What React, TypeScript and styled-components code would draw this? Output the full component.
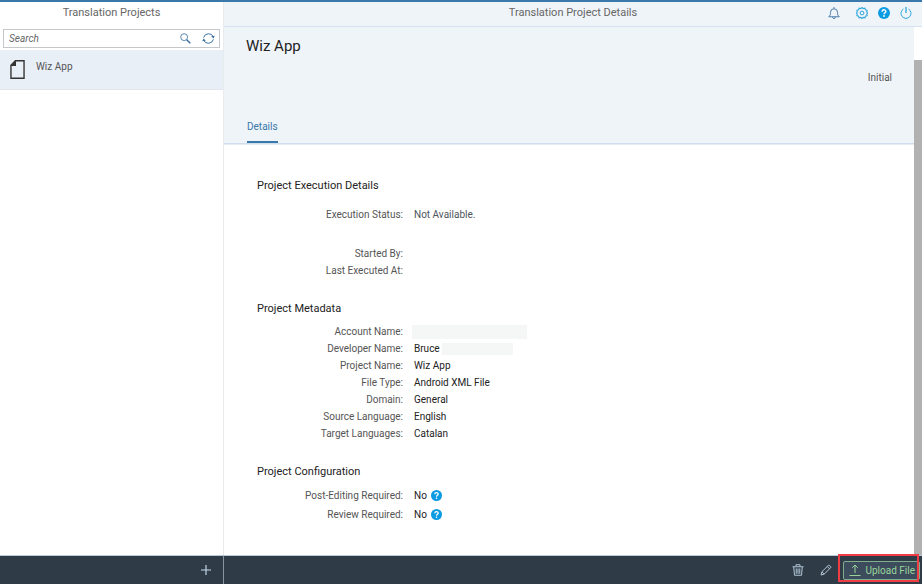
import React from "react";
import styled, { createGlobalStyle } from "styled-components";

const GlobalStyle = createGlobalStyle`
  *, *::before, *::after { box-sizing: border-box; }
  body { margin: 0; font-family: Roboto, "Liberation Sans", sans-serif; font-size: 10px; color: #333; background: #fff; }
  button, input { font: inherit; }
  h1, h2, h3, p, dl, dd, ul { margin: 0; padding: 0; font-weight: 400; }
`;

const Shell = styled.div`
  display: flex;
  min-height: 100vh;
  border-top: 2px solid #3a78ab;
  overflow: hidden;
`;

const Sidebar = styled.aside`
  flex: 0 0 223px;
  display: flex;
  flex-direction: column;
  background: #fff;
`;

const Main = styled.main`
  flex: 1;
  min-width: 0;
  display: flex;
  flex-direction: column;
  border-left: 1px solid #e9ecef;
`;

const SidebarTitle = styled.h2`
  height: 25px;
  line-height: 22px;
  text-align: center;
  font-size: 11px;
  color: #666;
`;

const SearchBox = styled.form`
  display: flex;
  align-items: center;
  gap: 11px;
  height: 19px;
  margin: 2px 3px;
  padding: 0 4px 0 5px;
  border: 1px solid #c4c8ca;
`;

const SearchInput = styled.input`
  flex: 1;
  min-width: 0;
  padding: 0;
  border: 0;
  outline: 0;
  background: transparent;
  color: #444;
  &::placeholder { color: #666; font-style: italic; opacity: 1; }
`;

const IconButton = styled.button<{ $color: string }>`
  display: flex;
  padding: 0;
  border: 0;
  background: transparent;
  color: ${(p) => p.$color};
  cursor: pointer;
`;

const ProjectItem = styled.li`
  display: flex;
  gap: 11px;
  height: 40px;
  padding: 10px;
  list-style: none;
  background: #e8eff7;
  border-bottom: 1px solid #e2e6ea;
  color: #555;
  line-height: 14px;
`;

const FootBar = styled.footer<{ $divider?: boolean }>`
  display: flex;
  align-items: center;
  justify-content: flex-end;
  height: 29px;
  margin-top: auto;
  margin-left: ${(p) => (p.$divider ? "-1px" : "0")};
  padding-right: ${(p) => (p.$divider ? "2px" : "12px")};
  background: #2f3c48;
  border-top: 1px solid #b9cbdb;
  border-left: ${(p) => (p.$divider ? "1px solid #8b949c" : "0")};
`;

const TopBar = styled.header`
  display: grid;
  grid-template-columns: 1fr auto 1fr;
  align-items: center;
  height: 25px;
  padding-bottom: 2px;
  background: #eff4f9;
  border-bottom: 1px solid #d9e2f2;
`;

const TopTitle = styled.h2`
  grid-column: 2;
  font-size: 11px;
  line-height: 18px;
  color: #666;
`;

const TopActions = styled.nav`
  display: flex;
  justify-content: flex-end;
  align-items: center;
  gap: 10px;
  padding-right: 10px;
`;

const BellSlot = styled.span`
  margin-right: 6px;
`;

const Body = styled.div`
  flex: 1;
  display: flex;
`;

const Page = styled.div`
  flex: 1;
  min-width: 0;
`;

const ScrollTrack = styled.div`
  flex: 0 0 8px;
  padding-top: 33px;
  display: flex;
`;

const ScrollThumb = styled.div`
  flex: 1;
  background: #b1b1b1;
`;

const ProjectHeader = styled.section`
  display: grid;
  grid-template-columns: 1fr auto;
  grid-template-rows: 41px 1fr 22px;
  height: 117px;
  padding: 0 22px;
  background: #eff4f8;
  border-bottom: 1px solid #cfddec;
  box-shadow: 0 1px 0 #e4ecf5;
`;

const ProjectTitle = styled.h1`
  font-size: 15px;
  line-height: 38px;
  color: #222;
`;

const Status = styled.p`
  grid-column: 2;
  grid-row: 2;
  line-height: 19px;
  color: #555;
`;

const Tab = styled.button`
  grid-row: 3;
  justify-self: start;
  margin-left: 1px;
  padding: 0 0 8px;
  border: 0;
  border-bottom: 2px solid #3a78ab;
  background: transparent;
  color: #3a78ab;
  line-height: 12px;
`;

const Details = styled.div`
  padding: 32px 33px 16px;
  display: grid;
  gap: 20px;
`;

const SectionTitle = styled.h3`
  margin-bottom: 5px;
  font-size: 11px;
  line-height: 19px;
  color: #222;
`;

const Fields = styled.dl<{ $row?: number; $top?: number }>`
  display: grid;
  grid-template-columns: 146px 1fr;
  grid-auto-rows: ${(p) => p.$row ?? 17}px;
  column-gap: 11px;
  line-height: ${(p) => p.$row ?? 17}px;
  margin-top: ${(p) => p.$top ?? 0}px;
`;

const Label = styled.dt`
  text-align: right;
  color: #555;
`;

const Value = styled.dd<{ $soft?: boolean }>`
  display: flex;
  align-items: center;
  gap: 4px;
  color: ${(p) => (p.$soft ? "#4c565c" : "#222")};
`;

const Redaction = styled.span<{ $width: number; $tall?: boolean }>`
  width: ${(p) => p.$width}px;
  height: ${(p) => (p.$tall ? 14 : 12)}px;
  margin-left: -2px;
  background: #f5f6f6;
`;

const FootActions = styled.div`
  display: flex;
  align-items: center;
  gap: 16px;
`;

const UploadSlot = styled.div`
  position: relative;
  margin-left: -5px;
  &::after {
    content: "";
    position: absolute;
    inset: -7px 1px -2px -5px;
    border: 2px solid #f03c44;
    pointer-events: none;
  }
`;

const UploadButton = styled.button`
  display: flex;
  align-items: center;
  gap: 5px;
  height: 19px;
  padding: 0 4px 0 5px;
  border: 1px solid #7fae8c;
  border-radius: 2px;
  background: #3c4c5c;
  color: #9bd49b;
  white-space: nowrap;
`;

type IconProps = { size?: number };

const Icon = ({ size = 12, children }: IconProps & { children: React.ReactNode }) => (
  <svg width={size} height={size} viewBox="0 0 24 24" fill="none" stroke="currentColor" strokeWidth="1.8" aria-hidden="true">
    {children}
  </svg>
);

const SearchIcon = () => (
  <Icon size={11}>
    <circle cx="9" cy="9" r="7.5" />
    <path d="M14.5 14.5l8 8" strokeWidth="3.2" />
  </Icon>
);
const RefreshIcon = () => (
  <Icon size={13}>
    <path d="M3 10.5A9.5 9.5 0 0 1 21 9M21 13.5A9.5 9.5 0 0 1 3 15" />
    <path d="M23.5 7l-2.3 5-4.2-4zM.5 17l2.3-5L7 16z" fill="currentColor" stroke="none" />
  </Icon>
);
const DocumentIcon = () => (
  <svg width="15" height="19" viewBox="0 0 14 18" aria-hidden="true">
    <path d="M5 .7h8.2v16.6H.8V5z" fill="none" stroke="#333" strokeWidth="1.3" />
    <path d="M5.6.3V5.6H.3z" fill="#333" />
  </svg>
);
const BellIcon = () => (
  <Icon size={12}>
    <path d="M1.5 19.5C4.500 17 5 15 5 10.500a7 7 0 0 1 14 0c0 4.500.5 6.500 3.500 9zM12 0v3M9 20.500c0 3.300 6 3.300 6 0" />
  </Icon>
);
const GearIcon = () => (
  <Icon size={12}>
    <path d="M12 1l2.500 2.300 3.300-.8 1.100 3.200 3.300.9-.8 3.200L23 12l-1.600 2.200.8 3.200-3.300.9-1.100 3.200-3.300-.8L12 23l-2.500-2.300-3.300.8-1.100-3.200-3.300-.9.8-3.200L1 12l1.600-2.200-.8-3.200 3.300-.9 1.100-3.200 3.300.8z" strokeWidth="2.200" />
    <circle cx="12" cy="12" r="3.800" strokeWidth="2" />
  </Icon>
);
const PowerIcon = () => (
  <Icon size={12}>
    <path d="M7 4a10 10 0 1 0 10 0" strokeWidth="2" />
    <path d="M12 0v12" strokeWidth="2.600" />
  </Icon>
);
const HelpIcon = ({ size = 11 }: IconProps) => (
  <svg width={size} height={size} viewBox="0 0 24 24" aria-hidden="true">
    <circle cx="12" cy="12" r="12" fill="#0a9be3" />
    <path d="M8.300 9.300c0-5 7.400-4.800 7.400-.5 0 2.700-3.700 2.700-3.700 5.700" fill="none" stroke="#fff" strokeWidth="2.800" />
    <circle cx="12" cy="18" r="1.800" fill="#fff" />
  </svg>
);
const PlusIcon = () => (
  <Icon size={10}>
    <path d="M12 0v24M0 12h24" strokeWidth="2.800" />
  </Icon>
);
const TrashIcon = () => (
  <Icon size={12}>
    <path d="M1 5.500h22M8 5V1.500h8V5M3.500 6l1.500 16.500h14l1.500-16.500M8.500 9v10.500M12 9v10.500M15.500 9v10.500" strokeWidth="2" />
  </Icon>
);
const PencilIcon = () => (
  <Icon size={12}>
    <path d="M2 22l1.800-6.500L17.500 2l4.500 4.500L8.500 20.200zM14.500 5l4.500 4.500M3.800 15.500l4.700 4.700" strokeWidth="2" />
  </Icon>
);
const UploadIcon = () => (
  <Icon size={12}>
    <path d="M12 18V2M6.500 7.500L12 2l5.500 5.500M1 23h22" strokeWidth="2" />
  </Icon>
);

const metadata: [string, React.ReactNode][] = [
  ["Account Name:", <Redaction key="a" $width={115} $tall />],
  ["Developer Name:", <React.Fragment key="d">Bruce <Redaction $width={71} /></React.Fragment>],
  ["Project Name:", "Wiz App"],
  ["File Type:", "Android XML File"],
  ["Domain:", "General"],
  ["Source Language:", "English"],
  ["Target Languages:", "Catalan"],
];

export default function App() {
  return (
    <>
      <GlobalStyle />
      <Shell>
        <Sidebar>
          <SidebarTitle>Translation Projects</SidebarTitle>
          <SearchBox>
            <SearchInput type="search" placeholder="Search" aria-label="Search" />
            <IconButton type="button" $color="#3a6f9f" aria-label="Search projects"><SearchIcon /></IconButton>
            <IconButton type="button" $color="#3a6f9f" aria-label="Refresh"><RefreshIcon /></IconButton>
          </SearchBox>
          <ul>
            <ProjectItem><DocumentIcon />Wiz App</ProjectItem>
          </ul>
          <FootBar>
            <IconButton type="button" $color="#c5d9eb" aria-label="Add project"><PlusIcon /></IconButton>
          </FootBar>
        </Sidebar>
        <Main>
          <TopBar>
            <TopTitle>Translation Project Details</TopTitle>
            <TopActions>
              <BellSlot>
                <IconButton type="button" $color="#3a6f9f" aria-label="Notifications"><BellIcon /></IconButton>
              </BellSlot>
              <IconButton type="button" $color="#2fa6de" aria-label="Settings"><GearIcon /></IconButton>
              <IconButton type="button" $color="#0a9be3" aria-label="Help"><HelpIcon size={12} /></IconButton>
              <IconButton type="button" $color="#2fa6de" aria-label="Log off"><PowerIcon /></IconButton>
            </TopActions>
          </TopBar>
          <Body>
            <Page>
              <ProjectHeader>
                <ProjectTitle>Wiz App</ProjectTitle>
                <Status>Initial</Status>
                <Tab type="button">Details</Tab>
              </ProjectHeader>
              <Details>
                <section>
                  <SectionTitle>Project Execution Details</SectionTitle>
                  <Fields $top={11}>
                    <Label>Execution Status:</Label><Value $soft>Not Available.</Value>
                  </Fields>
                  <Fields $top={22}>
                    <Label>Started By:</Label><Value />
                    <Label>Last Executed At:</Label><Value />
                  </Fields>
                </section>
                <section>
                  <SectionTitle>Project Metadata</SectionTitle>
                  <Fields>
                    {metadata.map(([label, value]) => (
                      <React.Fragment key={label}>
                        <Label>{label}</Label><Value>{value}</Value>
                      </React.Fragment>
                    ))}
                  </Fields>
                </section>
                <section>
                  <SectionTitle>Project Configuration</SectionTitle>
                  <Fields $row={19}>
                    <Label>Post-Editing Required:</Label>
                    <Value>No <IconButton type="button" $color="#0a9be3" aria-label="About post-editing"><HelpIcon /></IconButton></Value>
                    <Label>Review Required:</Label>
                    <Value>No <IconButton type="button" $color="#0a9be3" aria-label="About review"><HelpIcon /></IconButton></Value>
                  </Fields>
                </section>
              </Details>
            </Page>
            <ScrollTrack><ScrollThumb /></ScrollTrack>
          </Body>
          <FootBar $divider>
            <FootActions>
              <IconButton type="button" $color="#b3c6d6" aria-label="Delete"><TrashIcon /></IconButton>
              <IconButton type="button" $color="#b3c6d6" aria-label="Edit"><PencilIcon /></IconButton>
              <UploadSlot>
                <UploadButton type="button"><UploadIcon />Upload File</UploadButton>
              </UploadSlot>
            </FootActions>
          </FootBar>
        </Main>
      </Shell>
    </>
  );
}
